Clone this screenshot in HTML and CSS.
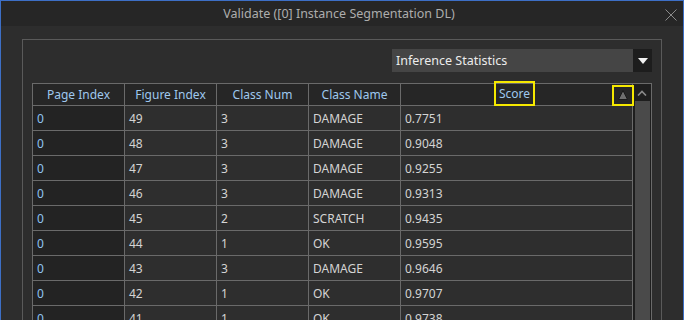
FILE: index.html
```html
<!DOCTYPE html>
<html lang="en">
<head>
  <meta charset="UTF-8">
  <title>Validate ([0] Instance Segmentation DL)</title>
  <link rel="stylesheet" href="styles.css">
</head>
<body>
  <div class="window">
    <div class="titlebar">
      <span class="title">Validate ([0] Instance Segmentation DL)</span>
      <svg class="close" width="12" height="12" viewBox="0 0 12 12">
        <path d="M0.5 0.5 L11.5 11.5 M11.5 0.5 L0.5 11.5" stroke="#8a8a8a" stroke-width="1" fill="none"/>
      </svg>
    </div>

    <div class="content">
      <div class="group">
        <div class="toolbar">
          <div class="combo">
            <span class="combo-text">Inference Statistics</span>
            <span class="combo-btn">
              <svg width="10" height="6" viewBox="0 0 10 6"><path d="M0 0 H10 L5 6 Z" fill="#f2f2f2"/></svg>
            </span>
          </div>
        </div>

        <div class="table-wrap">
          <div class="grid" id="grid">
            <div class="th">Page Index</div>
            <div class="th">Figure Index</div>
            <div class="th">Class Num</div>
            <div class="th">Class Name</div>
            <div class="th th-score">
              <span class="hl hl-score">Score</span>
              <span class="hl hl-sort">
                <svg width="10" height="10" viewBox="0 0 10 10"><path d="M5 0.5 L9.5 9.5 H0.5 Z" fill="#6e6e6e" stroke="#1a1a1a" stroke-width="1"/></svg>
              </span>
            </div>
          </div>
          <div class="vscroll">
            <div class="vscroll-up">
              <svg width="10" height="6" viewBox="0 0 10 6"><path d="M1 5.5 L5 1.5 L9 5.5" stroke="#8a8a8a" stroke-width="1.6" fill="none"/></svg>
            </div>
            <div class="vscroll-track"><div class="vscroll-thumb"></div></div>
          </div>
        </div>
      </div>
    </div>
  </div>

  <script>
    // rows: page, figure, class num, class name, score
    const rows = [
      [0, 49, 3, 'DAMAGE', '0.7751'],
      [0, 48, 3, 'DAMAGE', '0.9048'],
      [0, 47, 3, 'DAMAGE', '0.9255'],
      [0, 46, 3, 'DAMAGE', '0.9313'],
      [0, 45, 2, 'SCRATCH', '0.9435'],
      [0, 44, 1, 'OK', '0.9595'],
      [0, 43, 3, 'DAMAGE', '0.9646'],
      [0, 42, 1, 'OK', '0.9707'],
      [0, 41, 1, 'OK', '0.9738']
    ];

    const grid = document.getElementById('grid');
    rows.forEach(row => {
      row.forEach((value, i) => {
        const cell = document.createElement('div');
        cell.className = i === 0 ? 'td td-key' : 'td';
        cell.textContent = value;
        grid.appendChild(cell);
      });
    });
  </script>
</body>
</html>
```

FILE: styles.css
```css
* {
  margin: 0;
  padding: 0;
  box-sizing: border-box;
}

html, body {
  height: 100%;
  overflow: hidden;
}

body {
  font-family: "Noto Sans", "Liberation Sans", sans-serif;
  font-size: 12px;
  background: #2d2d2d;
  color: #d2d2d2;
}

.window {
  height: 100%;
  border: 1px solid #3d6fc6;
  border-bottom: none;
  background: #2d2d2d;
}

.titlebar {
  height: 25px;
  background: #262626;
  display: flex;
  align-items: center;
  justify-content: center;
  position: relative;
}

.title {
  font-size: 12.5px;
  color: #adadad;
  margin-top: -1px;
  margin-left: -6px;
}

.close {
  position: absolute;
  right: 6px;
  top: 8px;
}

.content {
  padding: 13px 21px 0 21px;
}

.group {
  border: 1px solid #5a5a5a;
  border-bottom: none;
  padding: 9px 9px 0 9px;
  height: 400px;
}

.toolbar {
  display: flex;
  justify-content: flex-end;
  margin-bottom: 11px;
}

.combo {
  width: 260px;
  height: 23px;
  background: #454545;
  display: flex;
  align-items: center;
}

.combo-text {
  flex: 1;
  padding-left: 4px;
  font-size: 12.5px;
  color: #ececec;
}

.combo-btn {
  width: 19px;
  height: 100%;
  background: #1d1d1d;
  display: flex;
  align-items: center;
  justify-content: center;
}

.table-wrap {
  display: flex;
  border: 1px solid #6a6a6a;
  border-bottom: none;
}

.grid {
  display: grid;
  grid-template-columns: 92px 92px 92px 92px 232px;
  grid-auto-rows: 25px;
  grid-template-rows: 22px;
}

.th {
  background: #262626;
  color: #9fc8ee;
  display: flex;
  align-items: center;
  justify-content: center;
  border-right: 1px solid #6a6a6a;
  border-bottom: 1px solid #6a6a6a;
  padding-bottom: 1px;
  position: relative;
}

.td {
  background: #2e2e2e;
  display: flex;
  align-items: center;
  padding-left: 4px;
  border-right: 1px solid #6a6a6a;
  border-bottom: 1px solid #6a6a6a;
  color: #d4d4d4;
}

.td-key {
  background: #232323;
  color: #8fc3f2;
}

.hl {
  position: absolute;
  border: 2px solid #f5e800;
  display: flex;
  align-items: center;
  justify-content: center;
}

.hl-score {
  left: 93px;
  top: -3px;
  width: 41px;
  height: 25px;
  padding-bottom: 1px;
}

.hl-sort {
  right: -2px;
  top: 1px;
  width: 22px;
  height: 21px;
  padding-bottom: 1px;
}

.vscroll {
  width: 18px;
  display: flex;
  flex-direction: column;
  background: #1e1e1e;
}

.vscroll-up {
  height: 17px;
  display: flex;
  align-items: center;
  justify-content: center;
}

.vscroll-track {
  flex: 1;
  padding: 0 1px 0 2px;
}

.vscroll-thumb {
  height: 100%;
  background: #4a4a4a;
}
```
